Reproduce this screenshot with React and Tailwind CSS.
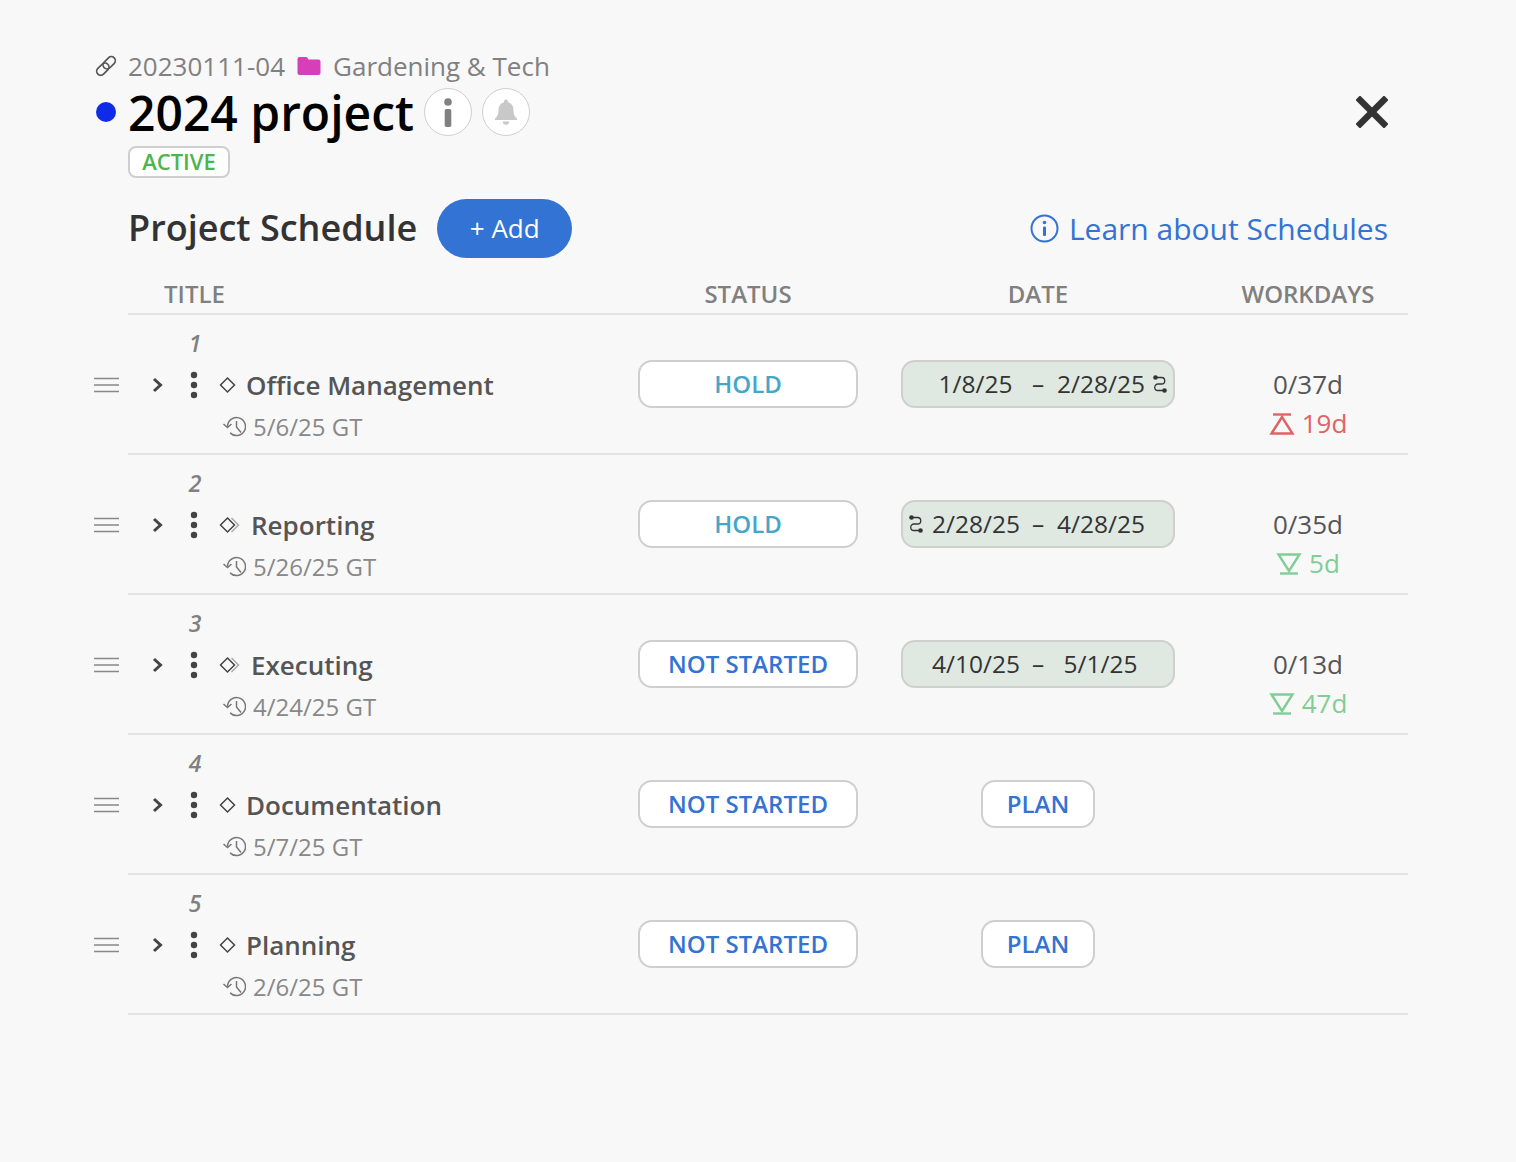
import React from "react"

const rows = [
  { n: 1, title: "Office Management", gt: "5/6/25 GT", status: "HOLD", from: "1/8/25", to: "2/28/25", link: "right", work: "0/37d", delta: "19d", late: true, icon: "single" },
  { n: 2, title: "Reporting", gt: "5/26/25 GT", status: "HOLD", from: "2/28/25", to: "4/28/25", link: "left", work: "0/35d", delta: "5d", icon: "double" },
  { n: 3, title: "Executing", gt: "4/24/25 GT", status: "NOT STARTED", from: "4/10/25", to: "5/1/25", work: "0/13d", delta: "47d", icon: "double" },
  { n: 4, title: "Documentation", gt: "5/7/25 GT", status: "NOT STARTED", icon: "single" },
  { n: 5, title: "Planning", gt: "2/6/25 GT", status: "NOT STARTED", icon: "single" },
]

const LinkIcon = () => (
  <svg width="24" height="24" viewBox="0 0 24 24" fill="none" stroke="#555" strokeWidth="1.700">
    <g transform="rotate(-45 12 12)">
      <rect x="0.500" y="8" width="14" height="8" rx="4" />
      <rect x="9.500" y="8" width="14" height="8" rx="4" />
    </g>
  </svg>
)

const FolderIcon = () => (
  <svg width="24" height="20" viewBox="0 0 24 20" fill="#d63fb8">
    <path d="M2.500 1h6.500a1.500 1.500 0 0 1 1.200.6L11.500 3.500H21.500A2 2 0 0 1 23.500 5.500V17a2 2 0 0 1-2 2H2.500a2 2 0 0 1-2-2V3a2 2 0 0 1 2-2z" />
  </svg>
)

const BellIcon = () => (
  <svg width="24" height="28" viewBox="0 0 24 28" fill="#c8c8c8">
    <path d="M12 1.500a2 2 0 0 1 2 2v.7c3.800 1 5.500 4 5.500 8 0 4.500 1.500 6.500 3.500 8.300v1.500H1v-1.500c2-1.800 3.500-3.800 3.500-8.300 0-4 1.700-7 5.500-8v-.7a2 2 0 0 1 2-2z" />
    <path d="M8.800 23.500h6.400a3.200 3.200 0 0 1-6.400 0z" />
  </svg>
)

const InfoBold = () => (
  <svg width="12" height="30" viewBox="0 0 12 30" fill="#808080">
    <circle cx="6" cy="5" r="3.800" />
    <rect x="2.700" y="12" width="6.600" height="18" rx="1.800" />
  </svg>
)

const CloseIcon = () => (
  <svg width="32" height="32" viewBox="0 0 32 32" stroke="#333" strokeWidth="6.500" strokeLinecap="square">
    <path d="M4 4l24 24M28 4L4 28" />
  </svg>
)

const InfoCircle = () => (
  <svg width="29" height="29" viewBox="0 0 29 29" fill="none" stroke="#3373d4" strokeWidth="2">
    <circle cx="14.500" cy="14.500" r="13" />
    <circle cx="14.500" cy="8.500" r="1.800" fill="#3373d4" stroke="none" />
    <rect x="13" y="12.500" width="3" height="9.500" rx="1" fill="#3373d4" stroke="none" />
  </svg>
)

const Grip = () => (
  <svg width="25" height="16" viewBox="0 0 25 16" stroke="#888" strokeWidth="1.500">
    <path d="M0 1.500h25M0 8h25M0 14.500h25" />
  </svg>
)

const Chevron = () => (
  <svg width="12" height="16" viewBox="0 0 12 16" fill="none" stroke="#444" strokeWidth="3">
    <path d="M2 2l6.500 6L2 14" />
  </svg>
)

const Dots = () => (
  <svg width="10" height="28" viewBox="0 0 10 28" fill="#444">
    <circle cx="5" cy="4" r="3.200" />
    <circle cx="5" cy="14" r="3.200" />
    <circle cx="5" cy="24" r="3.200" />
  </svg>
)

const Diamond = ({ type }) => (
  <svg width={type === "double" ? 22 : 17} height="18" viewBox={type === "double" ? "0 0 22 18" : "0 0 17 18"} fill="none" strokeWidth="1.500">
    {type === "double" && <path d="M12.500 2l7 7-7 7" stroke="#aaa" />}
    <path d="M8.500 2l7 7-7 7-7-7z" stroke="#444" />
  </svg>
)

const ClockBack = () => (
  <svg width="24" height="24" viewBox="0 0 24 24" fill="none" stroke="#777" strokeWidth="1.500">
    <path d="M5.500 11.500a9 9 0 1 1 2.600 6.400" />
    <path d="M1.500 9l4 3.500L9.500 9" />
    <path d="M14.500 6v6l4.500 5.500" />
  </svg>
)

const SwitchIcon = () => (
  <svg width="14" height="18" viewBox="0 0 14 18" fill="none" stroke="#333" strokeWidth="1.300">
    <circle cx="2.500" cy="2.500" r="2.300" fill="#333" stroke="none" />
    <circle cx="11.500" cy="15.500" r="2.300" fill="#333" stroke="none" />
    <path d="M2.500 2.500H8.500a3.200 3.200 0 0 1 0 6.500H5a3.200 3.200 0 0 0 0 6.500h6.500" />
  </svg>
)

const DeltaIcon = ({ late }) => (
  <svg width="26" height="22" viewBox="0 0 26 22" fill="none" stroke={late ? "#e06363" : "#80cd95"} strokeWidth="2.400">
    {late ? (
      <>
        <path d="M4 1.500h18" />
        <path d="M13 4L2.500 20.500h21z" />
      </>
    ) : (
      <>
        <path d="M2.500 1.500h21L13 18z" />
        <path d="M4 20.500h18" />
      </>
    )}
  </svg>
)

const Pill = ({ children, className }) => (
  <div className={`h-12 flex items-center justify-center rounded-[14px] border-2 border-[#cfcfcf] bg-white text-[24px] font-semibold ${className}`}>
    {children}
  </div>
)

const ScheduleRow = ({ row }) => (
  <div className="flex">
    <div className="w-[34px] h-[140px] flex items-center">
      <Grip />
    </div>
    <div className="flex-1 h-[140px] border-b-2 border-[#e4e4e4] grid grid-cols-[510px_220px_360px_180px]">
      {/* TITLE */}
      <div className="flex flex-col">
        <div className="h-[58px] w-[134px] pb-[2px] flex items-center justify-center text-[23px] italic font-semibold text-[#808080]">
          {row.n}
        </div>
        <div className="h-6 flex items-center">
          <div className="ml-6 w-[12px] flex"><Chevron /></div>
          <div className="ml-[25px] w-[10px] flex"><Dots /></div>
          <div className="ml-[20px] flex"><Diamond type={row.icon} /></div>
          <span className="ml-[10px] text-[26px] font-semibold text-[#555] whitespace-nowrap">
            {row.title}
          </span>
        </div>
        <div className="mt-[15px] h-[30px] pl-[94px] flex items-center gap-[7px] text-[24px] text-[#888]">
          <ClockBack />
          {row.gt}
        </div>
      </div>

      {/* STATUS */}
      <div className="pt-[45px]">
        <Pill className={row.status === "HOLD" ? "text-[#46a6c9]" : "text-[#3373d4]"}>
          {row.status}
        </Pill>
      </div>

      {/* DATE */}
      <div className="pt-[45px] flex justify-center">
        {row.from ? (
          <div className="w-[274px] h-12 flex items-center rounded-[14px] border-2 border-[#cfcfcf] bg-[#dfe9e2] px-[6px] text-[24.500px] font-medium text-[#333]">
            <span className="w-[14px] flex">{row.link === "left" && <SwitchIcon />}</span>
            <span className="ml-[9px] w-[87px] text-center">{row.from}</span>
            <span className="w-[38px] text-center">–</span>
            <span className="w-[87px] text-center">{row.to}</span>
            <span className="ml-[9px] w-[14px] flex">{row.link === "right" && <SwitchIcon />}</span>
          </div>
        ) : (
          <Pill className="w-[114px] text-[#3373d4]">PLAN</Pill>
        )}
      </div>

      {/* WORKDAYS */}
      <div className="pt-[50px] text-center text-[26px] leading-[39px] font-medium text-[#555]">
        {row.work && <div>{row.work}</div>}
        {row.delta && (
          <div className={`flex items-center justify-center gap-[7px] ${row.late ? "text-[#e06363]" : "text-[#80cd95]"}`}>
            <DeltaIcon late={row.late} />
            {row.delta}
          </div>
        )}
      </div>
    </div>
  </div>
)

export default function App() {
  return (
    <div className="min-h-[1162px] bg-[#f8f8f8] pt-[49px] pl-[94px] pr-[108px] font-['Open_Sans',sans-serif]">
      {/* HEADER */}
      <div className="h-[34px] flex items-center text-[26px] leading-[34px] text-[#808080]">
        <div className="w-[34px] flex"><LinkIcon /></div>
        <span>20230111-04</span>
        <div className="ml-3 flex"><FolderIcon /></div>
        <span className="ml-[12px]">Gardening &amp; Tech</span>
      </div>

      <div className="mt-[5px] h-12 flex items-center justify-between">
        <div className="flex items-center">
          <div className="w-[34px] flex pl-[2px]">
            <div className="w-[20px] h-[20px] rounded-full bg-[#0f2be8]" />
          </div>
          <h1 className="pt-px text-[48px] font-semibold text-black leading-none">2024 project</h1>
          <div className="ml-[10px] w-12 h-12 rounded-full border border-[#cfcfcf] bg-white flex items-center justify-center">
            <InfoBold />
          </div>
          <div className="ml-[10px] w-12 h-12 rounded-full border border-[#cfcfcf] bg-white flex items-center justify-center">
            <BellIcon />
          </div>
        </div>
        <div className="mr-5 flex"><CloseIcon /></div>
      </div>

      <div className="ml-[34px] mt-[10px] w-[102px] h-8 pb-[2px] rounded-[8px] border-2 border-[#cfcfcf] bg-white flex items-center justify-center text-[22px] font-semibold text-[#4cb54c]">
        ACTIVE
      </div>

      {/* TITLE BAR */}
      <div className="ml-[34px] mt-[21px] h-[59px] flex items-center justify-between">
        <div className="flex items-center">
          <h2 className="pb-[2px] text-[36px] font-semibold text-[#333]">Project Schedule</h2>
          <button className="ml-5 w-[135px] h-[59px] rounded-full bg-[#3373d4] text-white text-[26px] font-medium">
            + Add
          </button>
        </div>
        <div className="mr-5 flex items-center gap-[10px] text-[30px] text-[#3373d4]">
          <InfoCircle />
          Learn about Schedules
        </div>
      </div>

      {/* TABLE HEAD */}
      <div className="ml-[34px] h-[57px] border-b-2 border-[#e4e4e4] grid grid-cols-[510px_220px_360px_180px] items-center pt-4 text-[24px] font-semibold text-[#808080]">
        <div className="pl-9">TITLE</div>
        <div className="text-center">STATUS</div>
        <div className="text-center">DATE</div>
        <div className="text-center">WORKDAYS</div>
      </div>

      {/* ROWS */}
      {rows.map((row) => (
        <ScheduleRow key={row.n} row={row} />
      ))}
    </div>
  )
}
